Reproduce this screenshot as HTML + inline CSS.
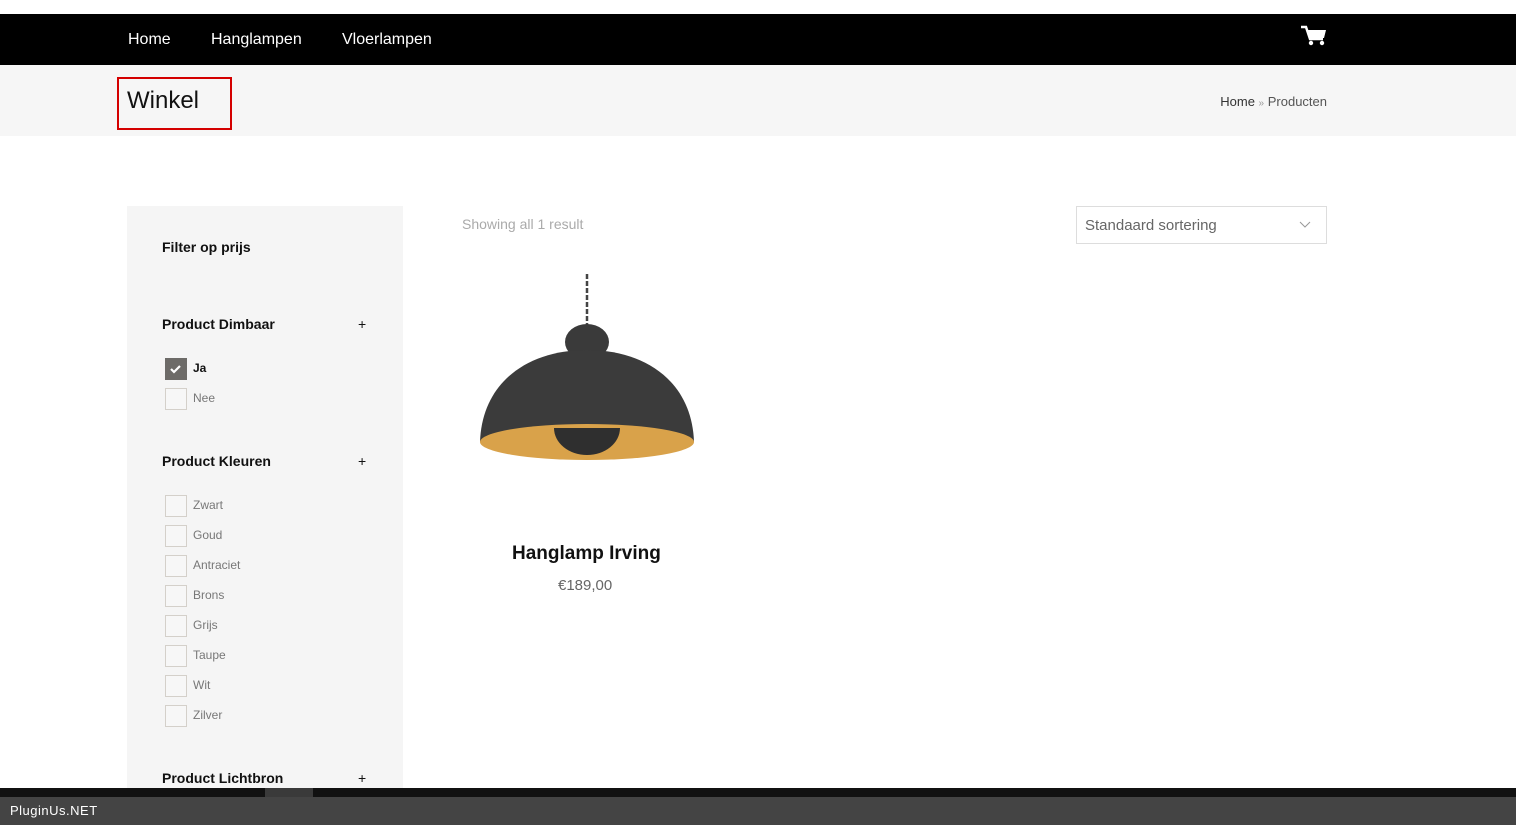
<!DOCTYPE html>
<html><head><meta charset="utf-8"><style>
*{margin:0;padding:0;box-sizing:border-box}
body{width:1516px;height:825px;overflow:hidden;background:#fff;font-family:"Liberation Sans",sans-serif;position:relative}
.a{position:absolute}
.nav{top:14px;left:0;width:1516px;height:51px;background:#000}
.nav span{position:absolute;top:17px;color:#fff;font-size:16px}
.hdr{top:65px;left:0;width:1516px;height:71px;background:#f6f6f6}
.side{top:206px;left:127px;width:276px;height:590px;background:#f5f5f5}
.h{position:absolute;left:35px;font-weight:bold;font-size:14px;color:#111}
.plus{position:absolute;left:231px;font-size:14px;color:#111}
.cb{position:absolute;left:38px;width:22px;height:22px;border:1px solid #d4d0ca;background:#f7f7f7}
.lb{position:absolute;left:66px;font-size:12px;color:#777}
</style></head><body>
<div class="a nav">
<span style="left:128px">Home</span>
<span style="left:211px">Hanglampen</span>
<span style="left:342px">Vloerlampen</span>
<svg class="a" style="left:1300px;top:11px" width="27" height="22" viewBox="0 0 27 22"><path d="M1 2h5l4 12h13" stroke="#fff" stroke-width="2.5" fill="none"/><path d="M7 5h19l-2 8H10z" fill="#fff"/><circle cx="11" cy="18" r="2.2" fill="#fff"/><circle cx="22" cy="18" r="2.2" fill="#fff"/></svg>
</div>
<div class="a hdr">
<div class="a" style="left:117px;top:12px;width:115px;height:53px;border:2px solid #d40000"></div>
<div class="a" style="left:127px;top:22px;font-size:24px;color:#111">Winkel</div>
<div class="a" style="left:1212px;top:29px;font-size:13px;color:#333;width:115px;text-align:right;white-space:nowrap">Home <span style="color:#999;font-size:10px">»</span> <span style="color:#555">Producten</span></div>
</div>
<div class="a side">
<div class="h" style="top:33px">Filter op prijs</div>
<div class="h" style="top:110px">Product Dimbaar</div><div class="plus" style="top:110px">+</div>
<div class="cb" style="top:152px;background:#6d6b68;border-color:#6d6b68"><svg width="20" height="20" viewBox="0 0 20 20"><path d="M5 10l3 3 6-6" stroke="#fff" stroke-width="2.2" fill="none"/></svg></div>
<div class="lb" style="top:155px;color:#111;font-weight:bold">Ja</div>
<div class="cb" style="top:182px"></div><div class="lb" style="top:185px">Nee</div>
<div class="h" style="top:247px">Product Kleuren</div><div class="plus" style="top:247px">+</div>
<div class="cb" style="top:289px"></div><div class="lb" style="top:292px">Zwart</div>
<div class="cb" style="top:319px"></div><div class="lb" style="top:322px">Goud</div>
<div class="cb" style="top:349px"></div><div class="lb" style="top:352px">Antraciet</div>
<div class="cb" style="top:379px"></div><div class="lb" style="top:382px">Brons</div>
<div class="cb" style="top:409px"></div><div class="lb" style="top:412px">Grijs</div>
<div class="cb" style="top:439px"></div><div class="lb" style="top:442px">Taupe</div>
<div class="cb" style="top:469px"></div><div class="lb" style="top:472px">Wit</div>
<div class="cb" style="top:499px"></div><div class="lb" style="top:502px">Zilver</div>
<div class="h" style="top:564px">Product Lichtbron</div><div class="plus" style="top:564px">+</div>
</div>
<div class="a" style="left:462px;top:216px;font-size:14px;color:#aaa">Showing all 1 result</div>
<div class="a" style="left:1076px;top:206px;width:251px;height:38px;border:1px solid #ddd;background:#fff">
<div class="a" style="left:8px;top:10px;font-size:15px;color:#666">Standaard sortering</div>
<svg class="a" style="left:222px;top:14px" width="12" height="8"><path d="M1 1l5 5 5-5" stroke="#999" fill="none"/></svg>
</div>
<svg class="a" style="left:470px;top:270px" width="235" height="200" viewBox="0 0 235 200">
<line x1="117" y1="4" x2="117" y2="58" stroke="#444" stroke-width="2.5" stroke-dasharray="5 2"/>
<ellipse cx="117" cy="72" rx="22" ry="18" fill="#3a3a3a"/>
<path d="M10 172 C12 112 58 80 117 80 C176 80 222 112 224 172 Z" fill="#3b3b3b"/>
<ellipse cx="117" cy="172" rx="107" ry="18" fill="#d9a24a"/>
<path d="M84 158 A33 27 0 0 0 150 158 Z" fill="#2f2f2f"/>
</svg>
<div class="a" style="left:512px;top:543px;font-size:19px;font-weight:bold;color:#111">Hanglamp Irving</div>
<div class="a" style="left:558px;top:577px;font-size:15px;color:#666">€189,00</div>
<div class="a" style="left:0;top:788px;width:1516px;height:9px;background:#111"></div>
<div class="a" style="left:265px;top:788px;width:48px;height:9px;background:#3a3a3a"></div>
<div class="a" style="left:0;top:797px;width:1516px;height:28px;background:#444">
<div class="a" style="left:10px;top:6px;font-size:13px;color:#fff;letter-spacing:.5px">PluginUs.NET</div>
</div>
</body></html>
